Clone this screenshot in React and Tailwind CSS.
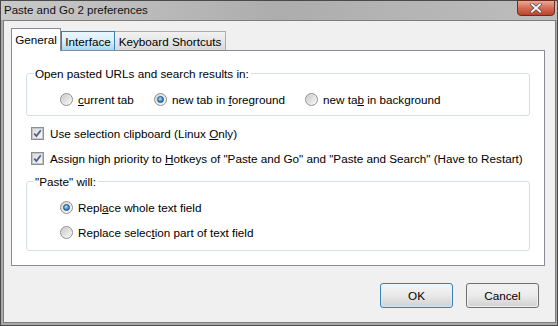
import React from "react";

const Radio = ({ checked }) => (
  <span className="flex h-[13px] w-[13px] shrink-0 items-center justify-center rounded-full border border-[#8e8f8f] bg-linear-to-br from-[#d4d4d4] to-[#fbfbfb]">
    {checked ? (
      <span className="h-[7px] w-[7px] rounded-full border border-[#1b4e7f] bg-[radial-gradient(circle_at_40%_35%,#b6e3fb,#2b79b6_70%,#1c4f83)]" />
    ) : (
      <span className="h-[9px] w-[9px] rounded-full bg-linear-to-br from-[#cbcbcb] to-[#f6f6f6]" />
    )}
  </span>
);

const Check = () => (
  <span className="flex h-[13px] w-[13px] shrink-0 items-center justify-center border border-[#8e8f8f] bg-white">
    <span className="flex h-[11px] w-[11px] items-center justify-center border border-[#c6c6c6] bg-linear-to-br from-[#dcdcdc] to-[#f8f8f8]">
      <svg width="9" height="9" viewBox="0 0 9 9">
        <path d="M1.2 4.6 L3.4 7 L7.8 1.3" fill="none" stroke="#4a5f92" strokeWidth="1.8" />
      </svg>
    </span>
  </span>
);

const Option = ({ checked, children }) => (
  <div className="flex h-[15px] items-center gap-[5px]">
    <Radio checked={checked} />
    <span className="whitespace-nowrap">{children}</span>
  </div>
);

export default function App() {
  return (
    <div className="flex h-[326px] w-[558px] flex-col border border-[#4a4a4a] bg-[#a9a9a9] font-['Liberation_Sans',Arial,sans-serif] text-[11.7px] leading-[15px] text-black">
      {/* title bar */}
      <div className="relative flex h-[19px] shrink-0 items-center bg-linear-to-r from-[#c9c9c9] via-[#adadad] to-[#bdbdbd] pl-[3px]">
        <span className="text-[11.5px] text-[#111]">Paste and Go 2 preferences</span>
        <div className="absolute right-[2px] top-[-1px] flex h-[16px] w-[38px] items-center justify-center rounded-b-[4px] border border-[#6e2a1f] bg-linear-to-b from-[#e9a998] via-[#d36d57] to-[#bf3f26]">
          <svg width="12" height="10" viewBox="0 0 12 10">
            <path d="M2 1.5 L10 8.5 M10 1.5 L2 8.5" stroke="#4a4a4a" strokeWidth="3.4" strokeLinecap="square" />
            <path d="M2 1.5 L10 8.5 M10 1.5 L2 8.5" stroke="#f4f4f4" strokeWidth="2" strokeLinecap="square" />
          </svg>
        </div>
      </div>

      {/* client area */}
      <div className="mb-[2px] ml-[2px] mr-[1px] flex flex-1 flex-col border border-[#7d7d7d] bg-[#f0f0f0] pl-[7px] pt-[7px]">
        {/* tabs */}
        <div className="flex h-[22px] items-end">
          <div className="relative z-10 -mb-px flex h-[23px] w-[50px] items-center justify-center border border-b-0 border-[#898c95] bg-white pb-[2px]">
            General
          </div>
          <div className="flex h-[19px] w-[54px] items-center justify-center border border-b-0 border-[#3c7fb1] bg-linear-to-b from-[#eaf6fd] via-[#d9f0fc] to-[#a7d9f5]">
            Interface
          </div>
          <div className="flex h-[19px] w-[111px] items-center justify-center border border-b-0 border-l-0 border-[#acacac] bg-linear-to-b from-[#f2f2f2] via-[#e6e6e6] to-[#d9d9d9]">
            Keyboard Shortcuts
          </div>
        </div>

        {/* panel */}
        <div className="flex h-[216px] w-[534px] flex-col border border-[#898c95] bg-white px-[14px]">
          <fieldset className="mt-[15px] rounded-[3px] border border-[#d5dfe5] pb-[8px]">
            <legend className="ml-[6px] px-[2px]">Open pasted URLs and search results in:</legend>
            <div className="mt-[11px] flex gap-[20px] pl-[33px]">
              <Option>
                <u>c</u>urrent tab
              </Option>
              <Option checked>
                new tab in <u>f</u>oreground
              </Option>
              <Option>
                new ta<u>b</u> in background
              </Option>
            </div>
          </fieldset>

          <div className="mt-[10px] flex h-[15px] items-center gap-[6px] pl-[5px]">
            <Check />
            <span className="whitespace-nowrap">
              Use selection clipboard (Linux <u>O</u>nly)
            </span>
          </div>
          <div className="mt-[10px] flex h-[15px] items-center gap-[6px] pl-[5px]">
            <Check />
            <span className="whitespace-nowrap">
              Assign high priority to <u>H</u>otkeys of "Paste and Go" and "Paste and Search" (Have to Restart)
            </span>
          </div>

          <fieldset className="mt-[8px] rounded-[3px] border border-[#d5dfe5] pb-[10px]">
            <legend className="ml-[6px] px-[2px]">"Paste" will:</legend>
            <div className="mt-[11px] flex flex-col gap-[10px] pl-[33px]">
              <Option checked>
                Repl<u>a</u>ce whole text field
              </Option>
              <Option>
                Replace selec<u>t</u>ion part of text field
              </Option>
            </div>
          </fieldset>
        </div>

        {/* buttons */}
        <div className="mt-[17px] flex justify-end gap-[13px] pr-[16px]">
          <button className="h-[25px] w-[73px] rounded-[3px] border border-[#3c7fb1] bg-linear-to-b from-[#eaf6fd] to-[#c9e6f7] p-px">
            <span className="flex h-full w-full items-center justify-center rounded-[2px] bg-linear-to-b from-[#f4f4f4] via-[#e9e9e9] to-[#d3d3d3]">
              OK
            </span>
          </button>
          <button className="h-[25px] w-[73px] rounded-[3px] border border-[#707070] p-px">
            <span className="flex h-full w-full items-center justify-center rounded-[2px] bg-linear-to-b from-[#f2f2f2] via-[#ebebeb] to-[#d2d2d2]">
              Cancel
            </span>
          </button>
        </div>
      </div>
    </div>
  );
}
